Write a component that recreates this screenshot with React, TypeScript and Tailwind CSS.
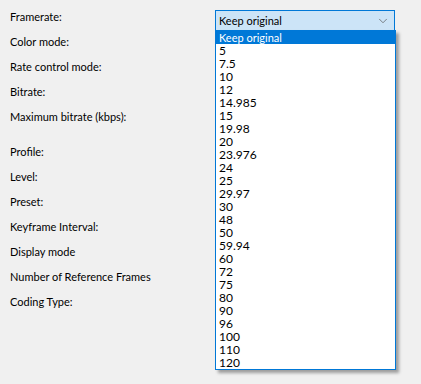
import { ChevronDown } from "lucide-react";

const groupA = [
  "Framerate:",
  "Color mode:",
  "Rate control mode:",
  "Bitrate:",
  "Maximum bitrate (kbps):",
];
const groupB = [
  "Profile:",
  "Level:",
  "Preset:",
  "Keyframe Interval:",
  "Display mode",
  "Number of Reference Frames",
  "Coding Type:",
];

const rates = [
  "Keep original",
  "5",
  "7.5",
  "10",
  "12",
  "14.985",
  "15",
  "19.98",
  "20",
  "23.976",
  "24",
  "25",
  "29.97",
  "30",
  "48",
  "50",
  "59.94",
  "60",
  "72",
  "75",
  "80",
  "90",
  "96",
  "100",
  "110",
  "120",
];

export default function App() {
  return (
    <div
      className="relative w-[421px] h-[384px] bg-[#f0f0f0] text-black text-[11px] overflow-hidden"
      style={{ fontFamily: 'Lato, "Noto Sans", sans-serif' }}
    >
      <div className="flex flex-col pt-[7px] pl-[10px]">
        {groupA.map((label, i) => (
          <div key={label} className="flex h-[25px] items-start">
            <div className="w-[205px] leading-[15px] pt-[2px]">{label}</div>
            {i === 0 && (
              <div className="w-[180px] h-[21px] mt-[3px] border border-[#0078d7] bg-[#cce4f7] flex items-center justify-between pl-[3px] pr-[4px]">
                <span className="leading-[15px]">Keep original</span>
                <ChevronDown size={14} strokeWidth={1.2} className="text-[#555]" />
              </div>
            )}
          </div>
        ))}
        <div className="h-[10px]" />
        {groupB.map((label) => (
          <div key={label} className="h-[25px] leading-[15px] pt-[2px]">
            {label}
          </div>
        ))}
      </div>

      {/* open dropdown list */}
      <div className="absolute left-[215px] top-[30px] w-[181px] border border-[#0078d7] bg-white shadow-[3px_3px_3px_rgba(0,0,0,0.35)]">
        {rates.map((r, i) => (
          <div
            key={r}
            className={`h-[13px] leading-[13px] pl-[3px] ${
              i === 0 ? "bg-[#0078d7] text-white text-[11px]" : "text-[12px]"
            }`}
          >
            {r}
          </div>
        ))}
      </div>
    </div>
  );
}
